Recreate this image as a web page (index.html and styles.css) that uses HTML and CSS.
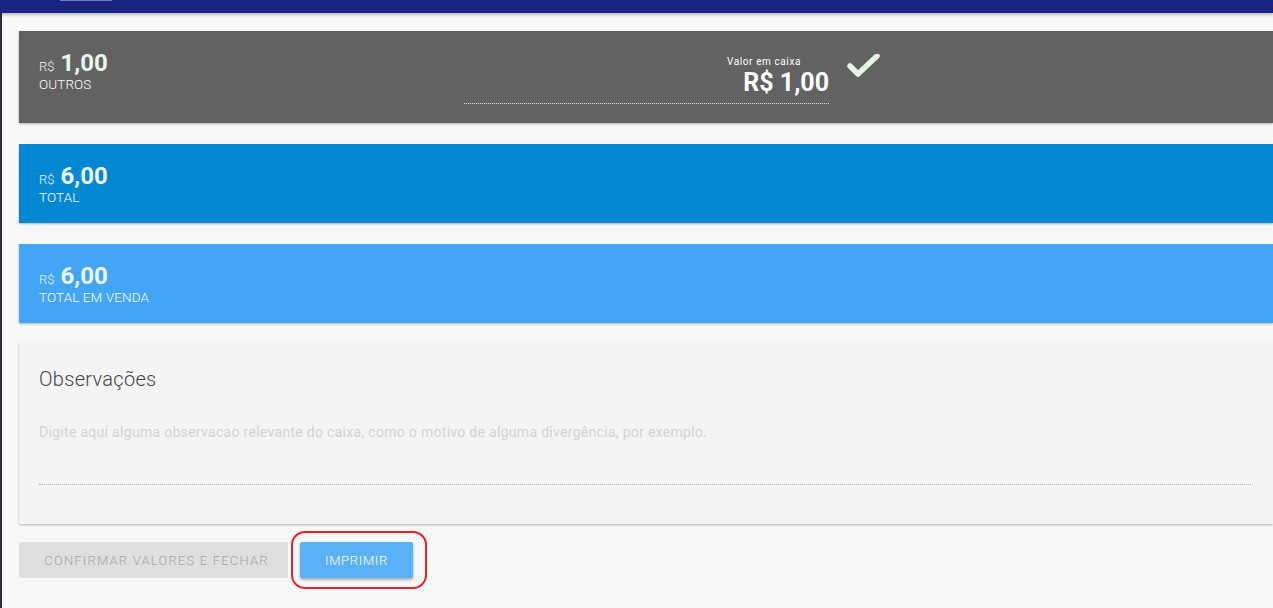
FILE: index.html
```html
<!DOCTYPE html>
<html lang="pt-BR">
<head>
    <meta charset="UTF-8">
    <meta name="viewport" content="width=device-width, initial-scale=1.0">
    <title>Fechamento de caixa</title>
    <link rel="stylesheet" href="styles.css">
</head>

<body>
    <header class="topbar">
        <span class="topbar-tab"></span>
    </header>

    <main class="page">
        <div class="card card-grey card-outros">
            <div class="amount-block">
                <div class="amount"><span class="currency">R$</span> 1,00</div>
                <div class="amount-label">OUTROS</div>
            </div>
            <div class="cash-field">
                <div class="cash-label">Valor em caixa</div>
                <div class="cash-value">R$ 1,00</div>
            </div>
            <svg class="check" width="34" height="26" viewBox="0 0 34 26">
                <path d="M3 12 L11 20 L30 2" fill="none" stroke="#e4f3e4" stroke-width="5.5" stroke-linecap="round" stroke-linejoin="round"/>
            </svg>
        </div>

        <div class="card card-blue">
            <div class="amount-block">
                <div class="amount"><span class="currency">R$</span> 6,00</div>
                <div class="amount-label">TOTAL</div>
            </div>
        </div>

        <div class="card card-light-blue">
            <div class="amount-block">
                <div class="amount"><span class="currency">R$</span> 6,00</div>
                <div class="amount-label">TOTAL EM VENDA</div>
            </div>
        </div>

        <div class="card card-notes">
            <h3 class="notes-title">Observações</h3>
            <div class="notes-input">Digite aqui alguma observacao relevante do caixa, como o motivo de alguma divergência, por exemplo.</div>
        </div>

        <div class="actions">
            <button class="btn btn-disabled">CONFIRMAR VALORES E FECHAR</button>
            <div class="highlight">
                <button class="btn btn-print">IMPRIMIR</button>
                <span class="highlight-ring"></span>
            </div>
        </div>
    </main>
</body>
</html>
```

FILE: styles.css
```css
html, body {
    margin: 0;
    padding: 0;
    height: 100%;
}

body {
    background-color: #f8f8f8;
    font-family: Roboto, "Liberation Sans", Arial, sans-serif;
    overflow: hidden;
}

.topbar {
    position: relative;
    height: 13px;
    background-color: #1a237e;
    box-shadow: 0 2px 3px rgba(0, 0, 0, 0.25);
    z-index: 2;
}

.topbar-tab {
    position: absolute;
    top: 0;
    left: 60px;
    width: 52px;
    height: 1px;
    background-color: #7a7fbf;
}

.page {
    border-left: 2px solid #2c2c3e;
    padding: 18px 0 40px 17px;
    min-height: 100%;
    box-sizing: border-box;
}

.card {
    display: flex;
    align-items: flex-start;
    padding: 18px 20px;
    margin-bottom: 21px;
    box-shadow: 0 1px 2px rgba(0, 0, 0, 0.28);
    color: #fff;
}

.card-grey {
    background-color: #626262;
    height: 92px;
    box-sizing: border-box;
}

.card-blue {
    background-color: #0288d1;
}

.card-light-blue {
    background-color: #42a5f5;
    margin-bottom: 18px;
}

.amount-block {
    flex: 0 0 425px;
}

.amount {
    font-size: 24px;
    font-weight: bold;
    line-height: 28px;
    height: 28px;
    color: #ecf7ec;
}

.currency {
    font-size: 13px;
    font-weight: 300;
    line-height: 1;
}

.amount-label {
    font-size: 13.5px;
    font-weight: 300;
    line-height: 15px;
    letter-spacing: 0.1px;
}

.cash-field {
    width: 365px;
    margin-top: 7px;
    padding-bottom: 5px;
    border-bottom: 1px dotted #e0e0e0;
    text-align: right;
}

.cash-label {
    font-size: 10px;
    line-height: 12px;
    letter-spacing: 0.6px;
    padding-right: 28px;
}

.cash-value {
    font-size: 25px;
    font-weight: bold;
    line-height: 30px;
}

.check {
    margin: 5px 0 0 18px;
}

.card-notes {
    display: block;
    background-color: #f4f4f4;
    color: #444;
    padding: 26px 20px 39px 20px;
    margin-bottom: 18px;
}

.notes-title {
    margin: 0;
    font-size: 20px;
    font-weight: 300;
    line-height: 24px;
    letter-spacing: 0.3px;
}

.notes-input {
    margin-top: 33px;
    height: 61px;
    font-size: 14px;
    line-height: 16px;
    letter-spacing: 0.3px;
    color: #d2d2d2;
    border-bottom: 1px dotted #b4b4b4;
    box-sizing: border-box;
}

.actions {
    display: flex;
    gap: 12px;
}

.btn {
    height: 36px;
    border: none;
    border-radius: 2px;
    font-family: Roboto, "Liberation Sans", Arial, sans-serif;
    font-size: 13px;
    font-weight: 300;
    letter-spacing: 0.7px;
    cursor: pointer;
}

.btn-disabled {
    width: 269px;
    padding-left: 12px;
    background-color: #dfdfdf;
    color: #a4a4a4;
    letter-spacing: 1.2px;
}

.btn-print {
    width: 113px;
    background-color: #5ab1f6;
    color: #fff;
    box-shadow: 0 2px 3px rgba(0, 0, 0, 0.3);
}

.highlight {
    position: relative;
}

.highlight-ring {
    position: absolute;
    top: -11px;
    left: -9px;
    right: -14px;
    bottom: -11px;
    border: 2px solid #e5202a;
    border-radius: 14px;
    pointer-events: none;
}
```
